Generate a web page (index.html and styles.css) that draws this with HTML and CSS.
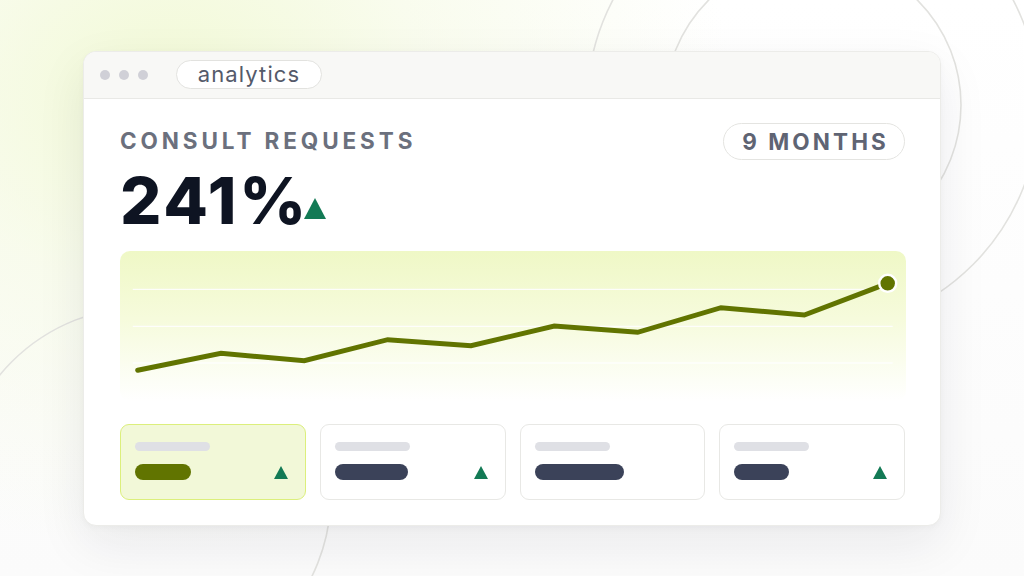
FILE: index.html
```html
<!DOCTYPE html>
<html>
<head>
<meta charset="utf-8">
<link rel="stylesheet" href="styles.css">
</head>
<body>
<div class="stage">
  <svg class="decor" width="1024" height="576" viewBox="0 0 1024 576">
    <circle cx="813" cy="105" r="226" />
    <circle cx="813" cy="105" r="148" />
    <circle cx="144" cy="494" r="187" />
  </svg>
  <div class="window">
    <div class="titlebar">
      <span class="dot"></span><span class="dot"></span><span class="dot"></span>
      <span class="tab">analytics</span>
    </div>
    <div class="content">
      <div class="head">
        <h1 class="title">CONSULT REQUESTS</h1>
        <span class="range">9 MONTHS</span>
      </div>
      <div class="metric">
        <span class="value">241%</span>
        <span class="tri big"></span>
      </div>
      <div class="chart">
        <svg width="786" height="150" viewBox="0 0 786 150">
          <g class="grid">
            <line x1="12.7" y1="38.3" x2="772.7" y2="38.3"/>
            <line x1="12.7" y1="75.3" x2="772.7" y2="75.3"/>
            <line x1="12.7" y1="112" x2="772.7" y2="112"/>
          </g>
          <polyline class="line" points="17.7,119.3 101,102.3 184.3,109.7 267.7,88.7 351,94.7 434.3,75 517.7,81.3 601,56.7 684.3,64 767.7,32.3"/>
          <circle class="end" cx="767.7" cy="32.3" r="8.5"/>
        </svg>
      </div>
      <div class="cards">
        <div class="card active">
          <div class="bar-light"></div>
          <div class="row"><div class="bar-dark" style="width:56px"></div><span class="tri"></span></div>
        </div>
        <div class="card">
          <div class="bar-light"></div>
          <div class="row"><div class="bar-dark" style="width:73px"></div><span class="tri"></span></div>
        </div>
        <div class="card">
          <div class="bar-light"></div>
          <div class="row"><div class="bar-dark" style="width:89px"></div></div>
        </div>
        <div class="card">
          <div class="bar-light"></div>
          <div class="row"><div class="bar-dark" style="width:55px"></div><span class="tri"></span></div>
        </div>
      </div>
    </div>
  </div>
</div>
</body>
</html>
```

FILE: styles.css
```css
* { box-sizing: border-box; }
html, body { margin: 0; padding: 0; }
body {
  width: 1024px;
  height: 576px;
  overflow: hidden;
  font-family: Inter, "Liberation Sans", sans-serif;
}
.stage {
  position: relative;
  width: 1024px;
  height: 576px;
  display: flex;
  align-items: center;
  justify-content: center;
  background:
    radial-gradient(ellipse 560px 460px at 170px 90px, rgba(241, 249, 212, 0.95) 0%, rgba(245, 250, 226, 0.6) 45%, rgba(255, 255, 255, 0) 100%),
    linear-gradient(180deg, #ffffff 0%, #fbfbfb 100%);
}
.decor {
  position: absolute;
  left: 0;
  top: 0;
}
.decor circle {
  fill: none;
  stroke: #e2e2df;
  stroke-width: 1.6;
}
.window {
  position: relative;
  width: 858px;
  height: 475px;
  background: #ffffff;
  border: 1px solid #ecece9;
  border-radius: 13px;
  box-shadow: 0 18px 50px rgba(30, 30, 50, 0.08), 0 2px 6px rgba(0, 0, 0, 0.03);
  overflow: hidden;
  display: flex;
  flex-direction: column;
}
.titlebar {
  height: 47px;
  flex: none;
  background: #f8f8f6;
  border-bottom: 1px solid #e9e9e6;
  display: flex;
  align-items: center;
  padding-left: 16px;
  gap: 9px;
}
.dot {
  width: 10px;
  height: 10px;
  border-radius: 50%;
  background: #d0d0d7;
}
.tab {
  margin-left: 19px;
  width: 146px;
  height: 29px;
  border: 1px solid #e2e2df;
  border-radius: 15px;
  background: #ffffff;
  color: #545a6a;
  font-size: 22px;
  line-height: 26px;
  text-align: center;
  letter-spacing: 1.1px;
}
.content {
  flex: 1;
  padding: 24px 35px 0 36px;
  display: flex;
  flex-direction: column;
}
.head {
  display: flex;
  align-items: center;
  justify-content: space-between;
  height: 37px;
}
.title {
  margin: 0;
  font-size: 22.5px;
  font-weight: 700;
  color: #6b707d;
  letter-spacing: 3.9px;
  line-height: 1;
}
.range {
  width: 182px;
  height: 37px;
  border: 1px solid #e4e4e1;
  border-radius: 19px;
  color: #5f6473;
  font-size: 22.5px;
  font-weight: 700;
  letter-spacing: 3.1px;
  line-height: 35px;
  text-align: center;
  padding-left: 3px;
}
.metric {
  display: flex;
  align-items: flex-end;
  height: 56px;
  margin-top: 17px;
}
.value {
  font-size: 65px;
  font-weight: 800;
  color: #0e1422;
  line-height: 1;
  letter-spacing: 2.8px;
}
.tri {
  width: 0;
  height: 0;
  border-left: 7.5px solid transparent;
  border-right: 7.5px solid transparent;
  border-bottom: 13px solid #137a55;
}
.tri.big {
  margin-left: -5px;
  border-left-width: 11.5px;
  border-right-width: 11.5px;
  border-bottom-width: 21px;
  margin-bottom: 14px;
}
.chart {
  margin-top: 18px;
  width: 786px;
  height: 150px;
  border-radius: 10px;
  background: linear-gradient(180deg, #eff8c6 0%, #f6fbdc 45%, #ffffff 100%);
}
.chart svg { display: block; }
.grid line {
  stroke: #ffffff;
  stroke-width: 1.3;
  opacity: 0.9;
}
.line {
  fill: none;
  stroke: #617400;
  stroke-width: 5;
  stroke-linejoin: miter;
  stroke-linecap: round;
}
.end {
  fill: #617400;
  stroke: #ffffff;
  stroke-width: 2.5;
}
.cards {
  margin-top: 23px;
  display: flex;
  gap: 14px;
}
.card {
  width: 186px;
  height: 76px;
  border: 1.5px solid #e8e8e5;
  border-radius: 9px;
  background: #ffffff;
  padding: 17px 17px 0 14px;
}
.card.active {
  background: #f2f8d8;
  border-color: #dcef7c;
}
.bar-light {
  width: 75px;
  height: 9px;
  border-radius: 5px;
  background: #dfe0e5;
}
.row {
  margin-top: 13px;
  display: flex;
  align-items: center;
  justify-content: space-between;
  height: 16px;
}
.bar-dark {
  height: 16px;
  border-radius: 8px;
  background: #3b4259;
}
.card.active .bar-dark { background: #617400; }
.row .tri { margin-top: 1px; }
```
